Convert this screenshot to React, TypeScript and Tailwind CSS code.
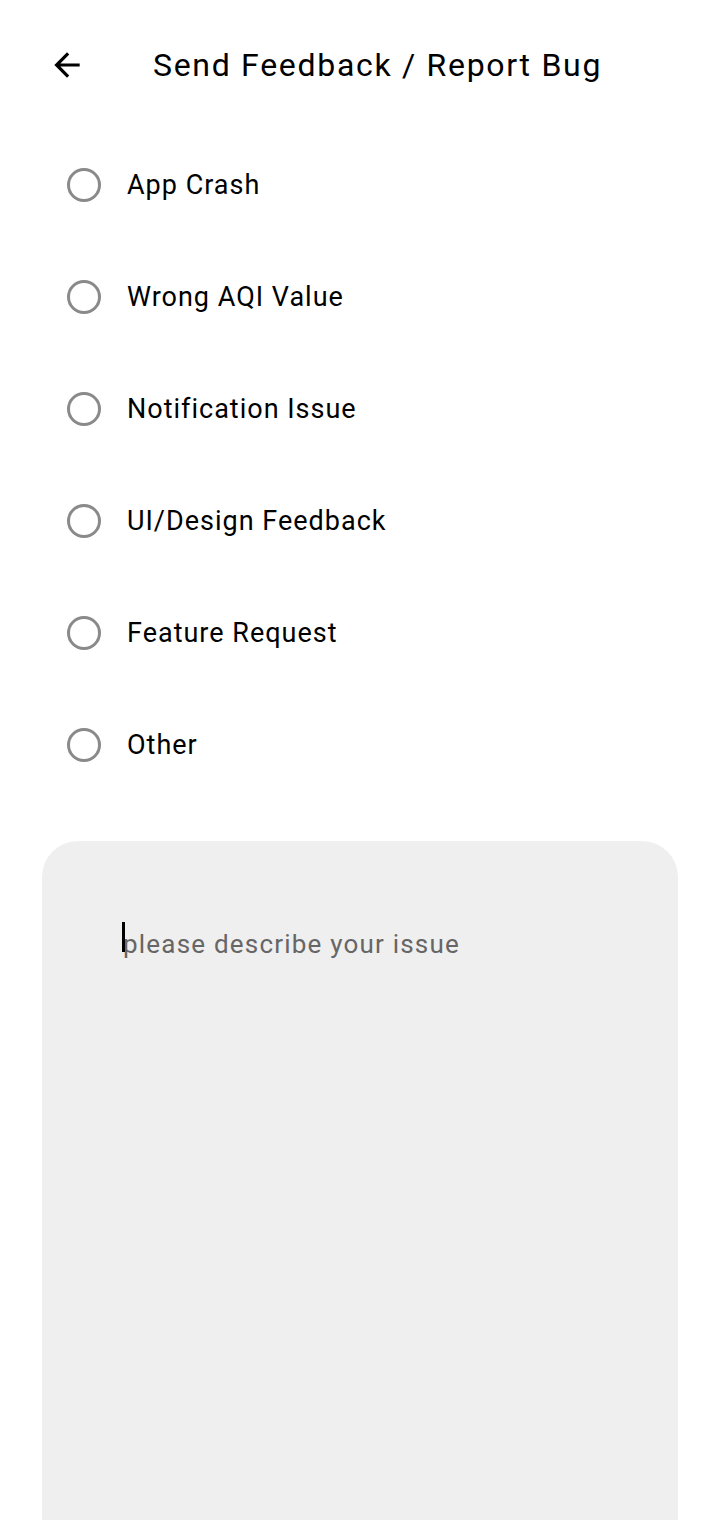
import { useState } from 'react';

const OPTIONS = ['App Crash', 'Wrong AQI Value', 'Notification Issue', 'UI/Design Feedback', 'Feature Request', 'Other'];

const App = () => {
  const [selected, setSelected] = useState<string | null>(null);

  return (
    <div className="w-[720px] h-[1520px] overflow-hidden bg-white text-black" style={{ fontFamily: 'Roboto, "Noto Sans", sans-serif' }}>
      {/* Header */}
      <div className="flex items-center h-[129px] pl-[48px] pt-[1px]">
        <svg width="38" height="38" viewBox="0 0 24 24">
          <path d="M20 11H7.83l5.59-5.59L12 4l-8 8 8 8 1.41-1.41L7.83 13H20v-2z" fill="#000" />
        </svg>
        <h1 className="ml-[67px] text-[32px] leading-none font-normal tracking-[1.7px]">Send Feedback / Report Bug</h1>
      </div>

      {/* Options */}
      <div className="flex flex-col">
        {OPTIONS.map(o => (
          <button
            key={o}
            onClick={() => setSelected(o)}
            className="flex items-center h-[112px] pl-[67px] text-left">
            <span className="w-[34px] h-[34px] rounded-full border-[3px] border-[#8a8a8a] flex items-center justify-center">
              {selected === o && <span className="w-[17px] h-[17px] rounded-full bg-[#8a8a8a]" />}
            </span>
            <span className="ml-[26px] text-[27px] leading-none tracking-[1px]">{o}</span>
          </button>
        ))}
      </div>

      {/* Description */}
      <div className="mx-[42px] mt-[40px] h-[720px] rounded-[36px] bg-[#efefef] pt-[86px] pl-[81px] pr-[40px]">
        <div className="relative">
          <span className="absolute left-[-1px] top-[-5px] w-[3px] h-[30px] bg-black z-10" />
          <textarea
            placeholder="please describe your issue"
            className="w-full h-[600px] bg-transparent outline-none resize-none text-[26px] leading-[34px] tracking-[1.2px] text-black placeholder:text-[#666666] caret-transparent"
            style={{ fontFamily: 'Roboto, "Noto Sans", sans-serif' }}
          />
        </div>
      </div>
    </div>
  );
};

export default App;
